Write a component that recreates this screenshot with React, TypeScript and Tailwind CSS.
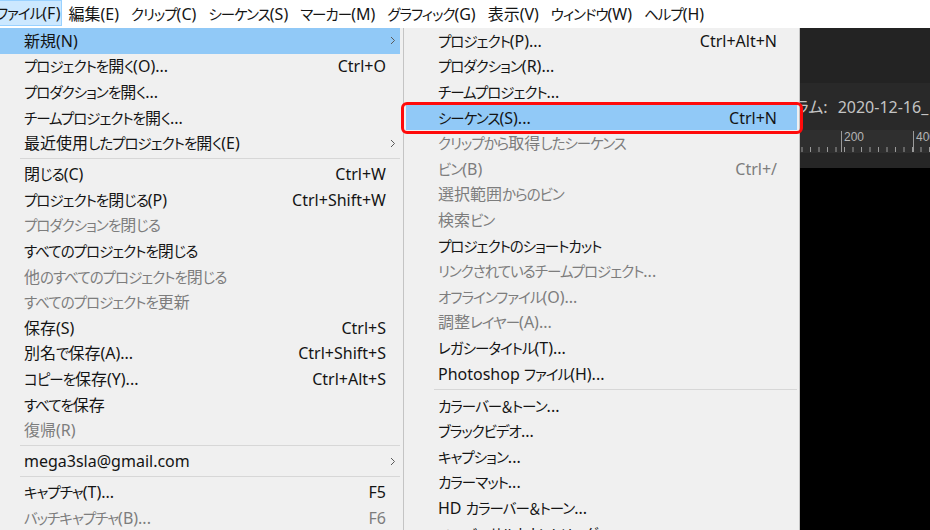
import React from "react";

type Item =
  | { sep: true }
  | { sep?: false; label: string; sc?: string; arrow?: boolean; dis?: boolean; hl?: boolean; red?: boolean };

const leftItems: Item[] = [
  { label: "新規(N)", arrow: true, hl: true },
  { label: "プロジェクトを開く(O)...", sc: "Ctrl+O" },
  { label: "プロダクションを開く..." },
  { label: "チームプロジェクトを開く..." },
  { label: "最近使用したプロジェクトを開く(E)", arrow: true },
  { sep: true },
  { label: "閉じる(C)", sc: "Ctrl+W" },
  { label: "プロジェクトを閉じる(P)", sc: "Ctrl+Shift+W" },
  { label: "プロダクションを閉じる", dis: true },
  { label: "すべてのプロジェクトを閉じる" },
  { label: "他のすべてのプロジェクトを閉じる", dis: true },
  { label: "すべてのプロジェクトを更新", dis: true },
  { label: "保存(S)", sc: "Ctrl+S" },
  { label: "別名で保存(A)...", sc: "Ctrl+Shift+S" },
  { label: "コピーを保存(Y)...", sc: "Ctrl+Alt+S" },
  { label: "すべてを保存" },
  { label: "復帰(R)", dis: true },
  { sep: true },
  { label: "mega3sla@gmail.com", arrow: true },
  { sep: true },
  { label: "キャプチャ(T)...", sc: "F5" },
  { label: "バッチキャプチャ(B)...", sc: "F6", dis: true },
];

const rightItems: Item[] = [
  { label: "プロジェクト(P)...", sc: "Ctrl+Alt+N" },
  { label: "プロダクション(R)..." },
  { label: "チームプロジェクト..." },
  { label: "シーケンス(S)...", sc: "Ctrl+N", hl: true, red: true },
  { label: "クリップから取得したシーケンス", dis: true },
  { label: "ビン(B)", sc: "Ctrl+/", dis: true },
  { label: "選択範囲からのビン", dis: true },
  { label: "検索ビン", dis: true },
  { label: "プロジェクトのショートカット" },
  { label: "リンクされているチームプロジェクト...", dis: true },
  { label: "オフラインファイル(O)...", dis: true },
  { label: "調整レイヤー(A)...", dis: true },
  { label: "レガシータイトル(T)..." },
  { label: "Photoshop ファイル(H)..." },
  { sep: true },
  { label: "カラーバー＆トーン..." },
  { label: "ブラックビデオ..." },
  { label: "キャプション..." },
  { label: "カラーマット..." },
  { label: "HD カラーバー＆トーン..." },
  { label: "ユニバーサルカウントリーダー..." },
];

const menubar = [
  "ファイル(F)",
  "編集(E)",
  "クリップ(C)",
  "シーケンス(S)",
  "マーカー(M)",
  "グラフィック(G)",
  "表示(V)",
  "ウィンドウ(W)",
  "ヘルプ(H)",
];

const KANA = /([\u3040-\u30ff\uff01-\uff0f]+)/;

function T({ s }: { s: string }) {
  const parts = s.split(KANA);
  return (
    <>
      {parts.map((p, i) =>
        i % 2 === 1 ? (
          <span key={i} className="text-[14.5px] tracking-[-1px]">
            {p}
          </span>
        ) : (
          <React.Fragment key={i}>{p}</React.Fragment>
        )
      )}
    </>
  );
}

function Chevron() {
  return (
    <svg width="6" height="9" viewBox="0 0 6 9" className="block">
      <path d="M1 1 L4.5 4.5 L1 8" fill="none" stroke="#5a5a5a" strokeWidth="1" />
    </svg>
  );
}

function MenuRows({ items, side }: { items: Item[]; side: "left" | "right" }) {
  return (
    <>
      {items.map((it, i) => {
        if (it.sep) {
          return (
            <div
              key={i}
              className={
                side === "left"
                  ? "h-[5.5px] shrink-0 flex items-center pl-[20px] pr-[3px]"
                  : "h-[6.5px] shrink-0 flex items-center pl-[30px] pr-[2px]"
              }
            >
              <div className="h-px w-full bg-[#d7d7d7]" />
            </div>
          );
        }
        const color = it.dis ? "text-[#7d7d7d]" : "text-[#141414]";
        return (
          <div
            key={i}
            className={
              (side === "left"
                ? "relative h-[25.6px] shrink-0 flex items-center pl-[24px] mr-[3px] "
                : "relative h-[25.6px] shrink-0 flex items-center pl-[32px] mx-[2px] ") +
              (it.hl ? "bg-[#91c9f7] " : "") +
              color
            }
          >
            {it.red && (
              <div className="absolute z-10 top-[-3px] bottom-[-4px] left-[-5px] right-[-6px] rounded-[6px] border-[3.5px] border-[#ff0a0a]" />
            )}
            <span className="flex-1 whitespace-nowrap">
              <T s={it.label} />
            </span>
            {it.sc && <span className="whitespace-nowrap">{it.sc}</span>}
            <span className={side === "left" ? "w-[14px] flex justify-center" : "w-[20px] flex justify-center"}>
              {it.arrow && <Chevron />}
            </span>
          </div>
        );
      })}
    </>
  );
}

function Ruler() {
  const ticks: number[] = [];
  for (let x = 2; x < 130; x += 8.5) ticks.push(x);
  return (
    <svg width="130" height="23" viewBox="0 0 130 23" className="block">
      {ticks.map((x, i) => (
        <line key={i} x1={x} y1="17" x2={x} y2="22" stroke="#9a9a9a" strokeWidth="1" />
      ))}
      <line x1="41.5" y1="1" x2="41.5" y2="22" stroke="#9a9a9a" strokeWidth="1" />
      <line x1="113.5" y1="1" x2="113.5" y2="22" stroke="#9a9a9a" strokeWidth="1" />
      <text x="44" y="11" fontSize="12" fill="#b4b4b4" fontFamily="Liberation Sans, sans-serif">200</text>
      <text x="116" y="11" fontSize="12" fill="#b4b4b4" fontFamily="Liberation Sans, sans-serif">400</text>
    </svg>
  );
}

export default function App() {
  return (
    <div className="w-[930px] h-[530px] overflow-hidden bg-white flex flex-col font-['Noto_Sans','Noto_Sans_CJK_JP',sans-serif] [font-feature-settings:'palt'] text-[16px] leading-none">
      {/* menu bar */}
      <div className="h-[28px] shrink-0 flex items-stretch bg-white text-[#141414]">
        {menubar.map((m, i) => (
          <div
            key={i}
            className={
              i === 0
                ? "flex items-center pl-0 pr-[1px] -ml-[5px] mb-[2px] bg-[#cce8ff] border border-[#99d1ff] whitespace-nowrap"
                : "flex items-center px-[6px] whitespace-nowrap"
            }
          >
            <T s={m} />
          </div>
        ))}
      </div>
      <div className="flex flex-1 min-h-0">
        {/* left menu */}
        <div className="w-[403px] shrink-0 bg-[#f0f0f0] flex flex-col">
          <MenuRows items={leftItems} side="left" />
        </div>
        {/* submenu */}
        <div className="relative z-10 w-[397px] shrink-0 bg-[#f0f0f0] border-l border-r border-[#c4c4c4] flex flex-col">
          <MenuRows items={rightItems} side="right" />
        </div>
        {/* dark panel */}
        <div className="flex-1 flex flex-col bg-black overflow-hidden">
          <div className="h-[55px] shrink-0 bg-[#232323]" />
          <div className="h-[47px] shrink-0 bg-[#292929] flex items-center text-[#c4c4c4] text-[16px] whitespace-nowrap -ml-[5px]">
            <span>ラム:</span>
            <span className="ml-[10px]">2020-12-16_</span>
          </div>
          <div className="h-[23px] shrink-0 bg-[#2f2f2f]">
            <Ruler />
          </div>
          <div className="h-[15px] shrink-0 bg-[#262626]" />
          <div className="flex-1 bg-black" />
        </div>
      </div>
    </div>
  );
}
